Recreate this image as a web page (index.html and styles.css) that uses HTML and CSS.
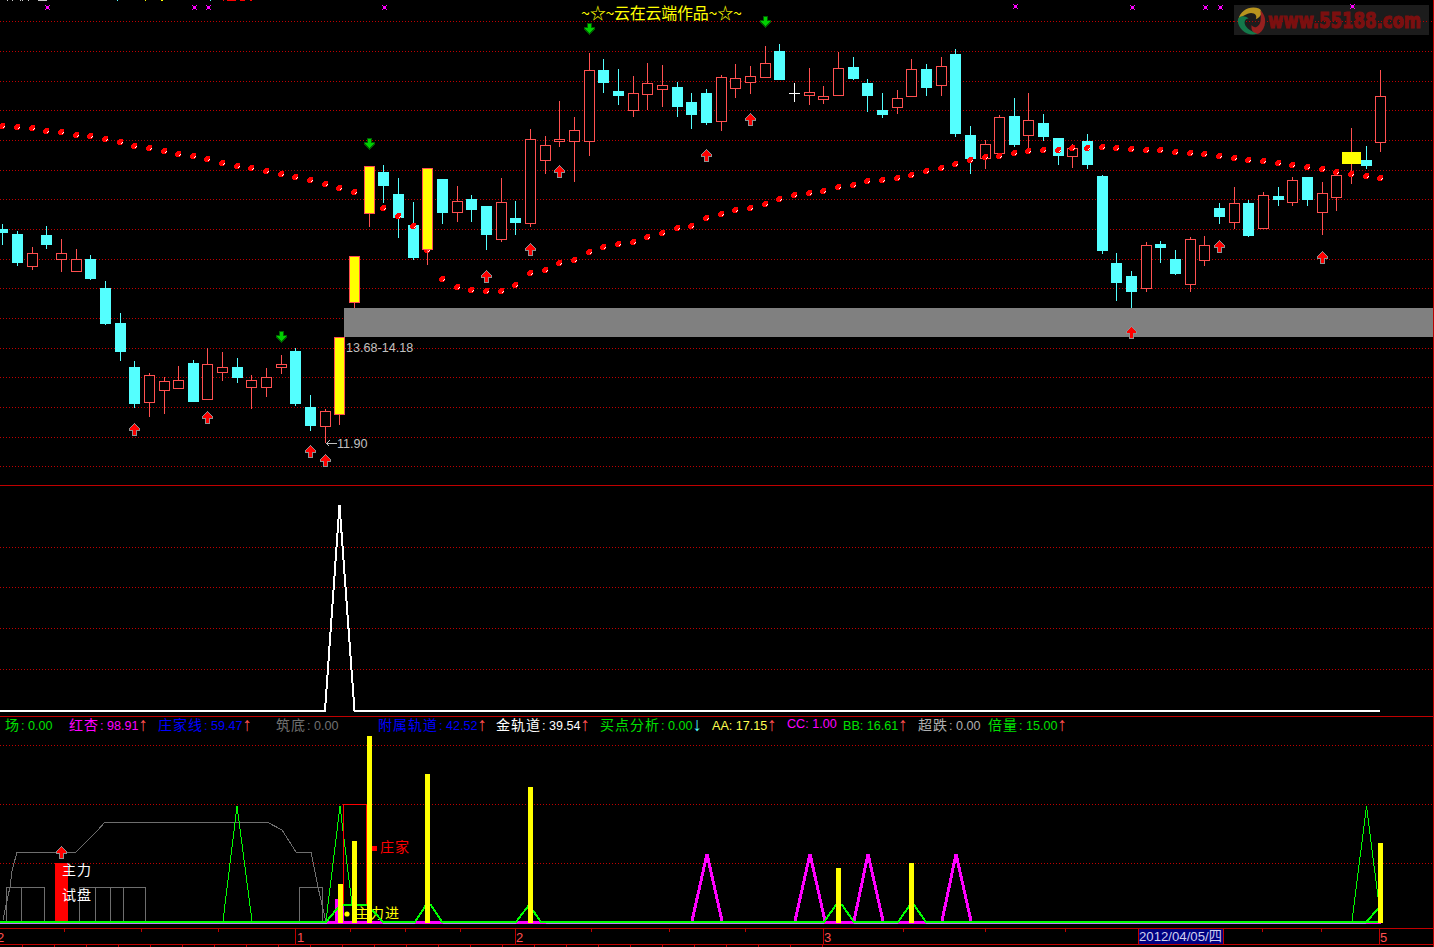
FILE: index.html
```html
<!DOCTYPE html>
<html lang="zh-CN">
<head>
<meta charset="utf-8">
<title>云在云端作品</title>
<link rel="stylesheet" href="styles.css">
</head>
<body>
<main class="terminal">
  <section class="pane pane-main">
    <svg id="main" class="chart" viewBox="0 0 1433 485" width="1433" height="485" shape-rendering="crispEdges"></svg>
  </section>
  <section class="pane pane-vol">
    <svg id="vol" class="chart" viewBox="0 486 1433 230" width="1433" height="230" shape-rendering="crispEdges"></svg>
  </section>
  <section class="pane pane-ind">
    <div class="legend">
      <span class="item green"><b>场</b>: 0.00</span>
      <span class="item magenta"><b>红杏</b>: 98.91<i class="up">↑</i></span>
      <span class="item blue"><b>庄家线</b>: 59.47<i class="up">↑</i></span>
      <span class="item gray"><b>筑底</b>: 0.00</span>
      <span class="item blue"><b>附属轨道</b>: 42.52<i class="up">↑</i></span>
      <span class="item white"><b>金轨道</b>: 39.54<i class="up">↑</i></span>
      <span class="item green"><b>买点分析</b>: 0.00<i class="down">↓</i></span>
      <span class="item yellow">AA: 17.15<i class="up">↑</i></span>
      <span class="item magenta">CC: 1.00</span>
      <span class="item green">BB: 16.61<i class="up">↑</i></span>
      <span class="item silver"><b>超跌</b>: 0.00</span>
      <span class="item green"><b>倍量</b>: 15.00<i class="up">↑</i></span>
    </div>
    <svg id="ind" class="chart" viewBox="0 734 1433 194" width="1433" height="194" shape-rendering="crispEdges"></svg>
  </section>
  <footer class="axis">
    <svg id="axis" class="chart" viewBox="0 929 1433 18" width="1433" height="18" shape-rendering="crispEdges"></svg>
  </footer>
</main>
<script src="chart.js"></script>
</body>
</html>
```

FILE: styles.css
```css
html, body {
  margin: 0;
  padding: 0;
  background: #000;
  overflow: hidden;
}

.terminal {
  display: flex;
  flex-direction: column;
  width: 1434px;
  height: 947px;
  box-sizing: border-box;
  border-right: 1px solid #c00000;
  background: #000;
}

.pane {
  flex: none;
  position: relative;
  border-bottom: 1px solid #c00000;
}

.chart { display: block; }

.legend {
  display: grid;
  grid-template-columns: 64px 89px 118px 102px 118px 104px 112px 75px 56px 75px 70px 90px;
  height: 17px;
  padding-left: 5px;
  font: 12.6px/15px "Liberation Sans", "Noto Sans CJK SC", sans-serif;
  white-space: nowrap;
}

.item b {
  font: 14px/15px "Noto Sans CJK SC", sans-serif;
  letter-spacing: 1px;
  margin-right: 1px;
}

.item i {
  font: 19px/15px "Liberation Sans", sans-serif;
  vertical-align: -1px;
}

.up { color: #ff5050; }
.down { color: #54ffff; }
.green { color: #00e000; }
.magenta { color: #ff00ff; }
.blue { color: #0000ff; }
.gray { color: #707070; }
.white { color: #fff; }
.silver { color: #b0b0b0; }
.yellow { color: #ffff50; }

/* chart primitives */
.grid { stroke: #c00000; stroke-width: 1; stroke-dasharray: 1 2; fill: none; }
.wick-up { stroke: #ff5050; stroke-width: 1; }
.wick-down { stroke: #54ffff; stroke-width: 1; }
.wick-cross { stroke: #fff; stroke-width: 1; }
.body-up { fill: #000; stroke: #ff5050; stroke-width: 1; }
.body-down { fill: #54ffff; }
.body-mark { fill: #ff0; stroke: #ff5050; stroke-width: 1; }
.body-flat { fill: #ff0; }
.band { fill: #808080; }
.dot { fill: #f00; }
.dot-glint { fill: #fff; }
.marker { stroke: #f0f; stroke-width: 1; }
.marker-core { fill: #f0f; }
.arrow-up { fill: #f00; stroke: #909090; stroke-width: 1; }
.arrow-down { fill: #00d000; stroke: #006000; stroke-width: 1; }
.note { fill: #c0c0c0; font: 12.6px "Liberation Sans", sans-serif; }
.note-line { stroke: #c0c0c0; stroke-width: 1; fill: none; }
.title { fill: #ff0; font: 16px "Noto Sans CJK SC", sans-serif; letter-spacing: -.25px; }
.logo-bg { fill: #1c1c1c; }
.logo-text { fill: #7c0f0f; stroke: #7c0f0f; stroke-width: 1.2; font: bold 21px "DejaVu Sans", sans-serif; }
.logo-gold { fill: #b8941e; }
.logo-red { fill: #96201f; }
.logo-green { fill: #14784a; }
.sliver-white { fill: #c8c8c8; }
.sliver-cyan { fill: #54ffff; }
.sliver-yellow { fill: #ff0; }
.sliver-red { fill: #f00; }
.white-line { stroke: #fff; stroke-width: 2; fill: none; }
.gray-line { stroke: #6e6e6e; stroke-width: 1; fill: none; }
.thin-green { stroke: #00ff00; stroke-width: 1; fill: none; }
.thick-green { stroke: #00ff00; stroke-width: 2; fill: none; }
.thick-magenta { stroke: #f0f; stroke-width: 3; fill: none; }
.base-magenta { fill: #f0f; }
.base-thin { fill: #c080ff; }
.red-bar { fill: #f00; }
.red-line { stroke: #f00; stroke-width: 1; fill: none; }
.yellow-bar { fill: #ff0; }
.yellow-dot { fill: #ff0; }
.red-dot { fill: #f00; }
.cjk-white { fill: #fff; font: 14px "Noto Sans CJK SC", sans-serif; letter-spacing: 1px; }
.cjk-yellow { fill: #ff0; font: 14px "Noto Sans CJK SC", sans-serif; letter-spacing: 1px; }
.cjk-red { fill: #f00; font: 14px "Noto Sans CJK SC", sans-serif; letter-spacing: 1px; }
.tick { stroke: #c00000; stroke-width: 1; }
.axis-line { stroke: #c00000; stroke-width: 1; }
.axis-label { fill: #ff5050; font: 13px "Liberation Sans", sans-serif; }
.date-box { fill: #000080; stroke: #c00000; stroke-width: 1; }
.date-text { fill: #d0d0f0; font: 13.2px "Liberation Sans", "Noto Sans CJK SC", sans-serif; }
```

FILE: chart.js
```js
var NS = 'http://www.w3.org/2000/svg';

function el(parent, tag, attrs, text) {
  var e = document.createElementNS(NS, tag);
  for (var k in attrs) e.setAttribute(k, attrs[k]);
  if (text) e.textContent = text;
  parent.appendChild(e);
  return e;
}
function vline(p, x, a, b, cls) { el(p, 'line', { x1: x + .5, x2: x + .5, y1: a, y2: b, 'class': cls }); }
function hline(p, y, a, b, cls) { el(p, 'line', { x1: a, x2: b, y1: y + .5, y2: y + .5, 'class': cls }); }
function poly(p, pts, cls) { el(p, 'polyline', { points: pts.join(' '), 'class': cls }); }
function box(p, x, y, w, h, cls) { el(p, 'rect', { x: x, y: y, width: w, height: h, 'class': cls }); }

/* x, wick top, body top, body bottom, wick bottom, kind (u up, d down, m marked, c cross, f flat) */
var candles = [
  [2,224,229,233,245,'d'],[17,231,234,263,266,'d'],[32,247,253,266,270,'u'],[46,226,235,245,249,'d'],
  [61,239,253,259,272,'u'],[76,249,259,271,271,'u'],[90,255,259,279,280,'d'],[105,281,288,324,325,'d'],
  [120,313,323,352,361,'d'],[134,361,367,404,408,'d'],[149,373,375,402,417,'u'],[164,377,381,390,414,'u'],
  [178,366,380,388,388,'u'],[193,360,363,402,402,'d'],[207,348,364,399,399,'u'],[222,352,367,372,381,'u'],
  [237,358,367,378,383,'d'],[251,375,380,387,409,'u'],[266,368,377,387,397,'u'],[281,355,364,367,374,'u'],
  [295,348,351,404,406,'d'],[310,395,407,426,431,'d'],[325,409,411,426,443,'u'],[339,337,337,414,425,'m'],
  [354,256,256,302,308,'m'],[369,166,166,213,227,'m'],[383,165,172,186,203,'d'],[398,178,194,218,238,'d'],
  [413,202,225,258,260,'d'],[427,168,168,249,265,'m'],[442,179,179,213,224,'d'],[457,186,201,212,222,'u'],
  [471,195,199,210,222,'d'],[486,206,206,235,250,'d'],[501,178,202,239,242,'u'],[515,201,218,223,235,'d'],
  [530,129,139,223,227,'u'],[545,136,145,160,174,'u'],[559,101,139,141,147,'u'],[574,117,130,141,182,'u'],
  [589,53,70,141,156,'u'],[603,59,70,83,93,'d'],[618,69,91,96,105,'d'],[633,76,93,110,117,'u'],
  [647,63,83,94,110,'u'],[662,65,85,89,107,'u'],[677,82,87,107,117,'d'],[691,93,102,115,129,'d'],
  [706,89,93,123,125,'d'],[721,75,77,121,131,'u'],[735,64,78,88,98,'u'],[750,66,76,82,94,'u'],
  [765,46,63,77,77,'u'],[779,44,51,80,80,'d'],[794,83,93,93,102,'c'],[809,68,92,95,105,'u'],
  [823,86,96,99,104,'u'],[838,52,68,95,95,'u'],[853,57,67,79,80,'d'],[867,79,83,96,112,'d'],
  [882,93,110,115,118,'d'],[897,90,98,107,114,'u'],[911,59,69,96,96,'u'],[926,64,69,88,96,'d'],
  [941,57,66,85,96,'u'],[955,49,54,134,137,'d'],[970,126,135,159,174,'d'],[985,140,144,158,169,'u'],
  [999,115,117,153,153,'u'],[1014,98,116,145,147,'d'],[1028,93,120,135,150,'u'],[1043,114,123,137,141,'d'],
  [1058,138,138,156,165,'d'],[1072,144,148,156,168,'u'],[1087,134,141,165,169,'d'],[1102,175,176,251,254,'d'],
  [1116,253,263,283,301,'d'],[1131,271,276,292,308,'d'],[1146,242,245,288,292,'u'],[1160,241,244,248,263,'d'],
  [1175,250,259,274,275,'d'],[1190,237,239,284,292,'u'],[1204,236,245,260,266,'u'],[1219,203,208,217,224,'d'],
  [1234,187,203,222,229,'u'],[1248,200,203,236,237,'d'],[1263,192,195,228,229,'u'],[1278,187,196,200,206,'d'],
  [1292,177,180,202,206,'u'],[1307,177,177,200,206,'d'],[1322,182,193,212,235,'u'],[1336,175,175,197,211,'u'],
  [1351,128,152,164,184,'f'],[1366,146,160,166,169,'d'],[1380,70,96,142,152,'u']
];

var dots = [
  [2,126],[17,127],[32,128],[46,131],[61,132],[76,135],[90,136],[105,139],[120,142],[134,146],[149,148],
  [164,151],[178,154],[193,156],[207,159],[222,163],[237,166],[251,168],[266,171],[281,174],[295,177],
  [310,180],[325,184],[339,188],[354,192],[383,208],[398,216],[413,226],[427,250],[442,279],[457,287],
  [471,290],[486,291],[501,291],[515,285],[530,273],[545,270],[559,263],[574,260],[589,252],[603,247],
  [618,244],[633,242],[647,237],[662,233],[677,228],[691,226],[706,218],[721,214],[735,210],[750,208],
  [765,204],[779,199],[794,195],[809,193],[823,191],[838,187],[853,185],[867,181],[882,180],[897,178],
  [911,175],[926,171],[941,168],[955,164],[970,160],[985,157],[999,156],[1014,153],[1028,151],[1043,150],
  [1058,150],[1072,148],[1087,148],[1102,147],[1116,148],[1131,149],[1146,150],[1160,150],[1175,152],
  [1190,153],[1204,154],[1219,156],[1234,158],[1248,160],[1263,161],[1278,163],[1292,165],[1307,167],
  [1322,169],[1336,172],[1351,174],[1366,176],[1380,178]
];

function upArrow(p, x, y) {
  el(p, 'path', { 'class': 'arrow-up', d: 'M0 -6 L5 -1 L5 1 L2 1 L2 6 L-2 6 L-2 1 L-5 1 L-5 -1 Z', transform: 'translate(' + (x + .5) + ' ' + (y + .5) + ')' });
}
function downArrow(p, x, y) {
  el(p, 'path', { 'class': 'arrow-down', d: 'M0 6 L5 1 L5 -1 L2 -1 L2 -5 L-2 -5 L-2 -1 L-5 -1 L-5 1 Z', transform: 'translate(' + (x + .5) + ' ' + y + ')' });
}
function drawGrid(p, ys) {
  ys.forEach(function (y) { hline(p, y, 0, 1433, 'grid'); });
}

function drawCandle(p, c) {
  var x = c[0], k = c[5];
  var wick = k === 'd' ? 'wick-down' : k === 'c' ? 'wick-cross' : 'wick-up';
  if (c[1] < c[2]) vline(p, x, c[1], c[2], wick);
  if (c[4] > c[3]) vline(p, x, c[3], c[4], wick);
  if (k === 'u') box(p, x - 4.5, c[2] + .5, 10, c[3] - c[2], 'body-up');
  if (k === 'd') box(p, x - 5, c[2], 11, c[3] - c[2], 'body-down');
  if (k === 'm') box(p, x - 4.5, c[2] + .5, 10, c[3] - c[2], 'body-mark');
  if (k === 'f') box(p, x - 9, c[2], 19, c[3] - c[2], 'body-flat');
  if (k === 'c') hline(p, c[2], x - 5, x + 6, 'wick-cross');
}

function drawMain() {
  var p = document.getElementById('main');
  drawGrid(p, [21, 51, 81, 110, 140, 170, 199, 229, 259, 288, 318, 348, 377, 407, 437, 466]);

  /* slivers of the cropped header text */
  [[7,1],[12,1],[20,1],[22,1],[28,1],[38,9]].forEach(function (s) { box(p, s[0], 0, s[1], 1, 'sliver-white'); });
  [[117,1],[210,1]].forEach(function (s) { box(p, s[0], 0, s[1], 1, 'sliver-cyan'); });
  [[145,1],[161,2]].forEach(function (s) { box(p, s[0], 0, s[1], 1, 'sliver-yellow'); });
  [[223,1],[227,9],[240,5],[250,2]].forEach(function (s) { box(p, s[0], 0, s[1], 1, 'sliver-red'); });

  /* watermark */
  box(p, 1234, 5, 195, 30, 'logo-bg');
  hline(p, 21, 1234, 1429, 'grid');
  var swirl = el(p, 'g', { transform: 'translate(1252 21)', 'shape-rendering': 'auto' });
  [['logo-gold', -10], ['logo-red', 110], ['logo-green', 230]].forEach(function (s) {
    el(swirl, 'path', { 'class': s[0], transform: 'rotate(' + s[1] + ')', d: 'M-13 -4 C-10 -13 2 -16 9 -11 C13 -8 10 -2 4 -1 C7 -5 3 -9 -3 -8 C-7 -7 -10 -6 -13 -4 Z' });
  });
  el(p, 'text', { 'class': 'logo-text', x: 1268, y: 28, textLength: 153, lengthAdjust: 'spacingAndGlyphs', 'shape-rendering': 'auto' }, 'www.55188.com');

  /* candles except marked ones */
  candles.forEach(function (c) { if (c[5] !== 'm') drawCandle(p, c); });

  /* stop-and-reverse dots */
  dots.forEach(function (d) {
    var g = el(p, 'g', { transform: 'translate(' + d[0] + ' ' + d[1] + ')' });
    el(g, 'polygon', { 'class': 'dot', points: '-1,-3 2,-3 3,-2 3,1 1,3 -2,3 -3,2 -3,-1' });
    box(g, 1, 1, 1, 1, 'dot-glint');
    box(g, 2, 0, 1, 1, 'dot-glint');
  });

  candles.forEach(function (c) { if (c[5] === 'm') drawCandle(p, c); });

  box(p, 344, 308, 1089, 29, 'band');

  [[47,7],[194,7],[208,7],[384,7],[1015,6],[1132,7],[1205,7],[1220,7],[1352,6]].forEach(function (m) {
    var x = m[0], y = m[1];
    el(p, 'line', { x1: x - 2, y1: y - 2, x2: x + 3, y2: y + 3, 'class': 'marker' });
    el(p, 'line', { x1: x + 3, y1: y - 2, x2: x - 2, y2: y + 3, 'class': 'marker' });
    box(p, x - 1, y - 1, 3, 3, 'marker-core');
  });

  [[134,429],[207,417],[310,451],[325,460],[486,276],[530,249],[559,171],[706,155],[750,119],[1131,332],[1219,246],[1322,257]]
    .forEach(function (a) { upArrow(p, a[0], a[1]); });
  [[369,143],[589,28],[765,21],[281,336]].forEach(function (a) { downArrow(p, a[0], a[1]); });

  el(p, 'text', { 'class': 'title', x: 581, y: 19 }, '~☆~云在云端作品~☆~');
  el(p, 'text', { 'class': 'note', x: 346, y: 352 }, '13.68-14.18');
  el(p, 'text', { 'class': 'note', x: 337, y: 448 }, '11.90');
  hline(p, 443, 326, 337, 'note-line');
  el(p, 'path', { 'class': 'note-line', d: 'M329.5 440.5 L326.5 443.5 L329.5 446.5' });
}

function drawVol() {
  var p = document.getElementById('vol');
  drawGrid(p, [547, 587, 628, 669]);
  poly(p, ['0,710.5', '325,710.5', '339.5,505', '354.5,710.5', '1380,710.5'], 'white-line');
}

function drawInd() {
  var p = document.getElementById('ind');
  drawGrid(p, [745, 804, 863]);

  /* grey envelope and boxes */
  poly(p, ['3,920', '6,905', '10,887', '12,871', '17,852', '76,852', '98,830', '105,822', '267,822', '282,830', '296,852', '311,852', '318,887', '326,922'], 'gray-line');
  [[6,44,[21]],[79,145,[95,110,123]],[299,322,[]]].forEach(function (b) {
    el(p, 'path', { 'class': 'gray-line', d: 'M' + (b[0] + .5) + ' 921 V887.5 H' + (b[1] + .5) + ' V921' });
    b[2].forEach(function (x) { vline(p, x, 887, 921, 'gray-line'); });
  });
  box(p, 55, 863, 13, 58, 'red-bar');
  upArrow(p, 61, 852);

  /* thin green peaks */
  poly(p, ['223,921', '237,806', '252,921'], 'thin-green');
  poly(p, ['326,921', '340,806', '354,921'], 'thin-green');
  poly(p, ['1352,921', '1366.5,806', '1379,905'], 'thin-green');

  /* magenta base and peaks */
  box(p, 0, 923, 1381, 1, 'base-thin');
  [[327,56],[415,28],[516,30],[824,30],[898,28],[1366,15]].forEach(function (b) { box(p, b[0], 921, b[1], 3, 'base-magenta'); });
  box(p, 335, 899, 9, 24, 'base-magenta');
  [[692,707,722],[795,810,825],[854,868,883],[942,956,971]].forEach(function (t) {
    poly(p, [t[0] + ',921', t[1] + ',854', t[2] + ',921'], 'thick-magenta');
  });

  /* red frame */
  el(p, 'path', { 'class': 'red-line', d: 'M343.5 905 V804.5 H366.5 V905' });

  el(p, 'text', { 'class': 'cjk-yellow', x: 355, y: 918 }, '主力进');
  el(p, 'circle', { 'class': 'yellow-dot', cx: 347, cy: 914, r: 2.6, 'shape-rendering': 'auto' });
  box(p, 372, 846, 5, 5, 'red-dot');
  el(p, 'text', { 'class': 'cjk-red', x: 380, y: 852 }, '庄家');
  el(p, 'text', { 'class': 'cjk-white', x: 62, y: 875 }, '主力');
  el(p, 'text', { 'class': 'cjk-white', x: 62, y: 900 }, '试盘');

  /* thick green line */
  poly(p, ['0,922', '326,922', '336,910', '342,905', '368,905', '383,922', '415,922', '426,905', '431,905', '442,922',
           '516,922', '529,905', '541,922', '824,922', '836,905', '842,905', '854,922', '898,922', '910,905', '914,905',
           '926,922', '1366,922', '1378,909', '1381,907'], 'thick-green');
  hline(p, 921, 1366, 1381, 'thick-green');

  /* yellow bars */
  [[338,884],[352,841],[367,736],[425,774],[528,787],[836,868],[909,863],[1378,843]].forEach(function (b) {
    box(p, b[0], b[1], 5, 923 - b[1], 'yellow-bar');
  });
}

function drawAxis() {
  var p = document.getElementById('axis');
  hline(p, 944, 0, 1433, 'axis-line');
  [64,141,218,350,405,460,591,669,745,903,985,1065,1262,1321].forEach(function (x) { vline(p, x, 929, 932, 'tick'); });
  [295,515,823,1379].forEach(function (x) { vline(p, x, 929, 944, 'tick'); });
  [['2',-4],['1',296],['2',515],['3',823],['5',1379]].forEach(function (l) {
    el(p, 'text', { 'class': 'axis-label', x: l[1] + 1, y: 942 }, l[0]);
  });
  for (var x = 22; x < 840; x += 32) vline(p, x, 945, 947, 'tick');
  el(p, 'rect', { 'class': 'date-box', x: 1138.5, y: 928.5, width: 85, height: 16 });
  el(p, 'text', { 'class': 'date-text', x: 1139, y: 941 }, '2012/04/05/四');
}

drawMain();
drawVol();
drawInd();
drawAxis();
```
